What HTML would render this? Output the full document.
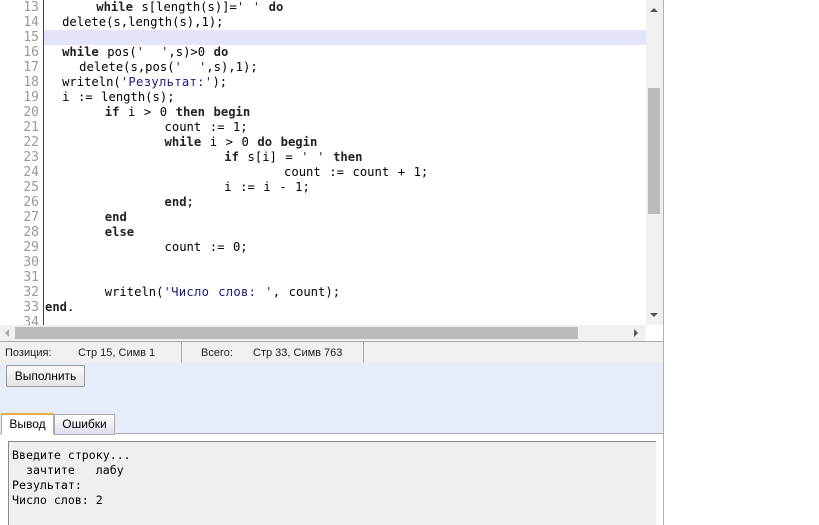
<!DOCTYPE html>
<html><head><meta charset="utf-8"><style>
body{margin:0;width:819px;height:525px;background:#fff;position:relative;overflow:hidden;font-family:"Liberation Sans",Arial,sans-serif}
.panel{position:absolute;left:0;top:0;width:663px;height:525px;border-right:1px solid #b0b0b0;background:#fff;overflow:hidden}
.gut{position:absolute;left:0;top:0;width:43px;height:325px;border-right:1px solid #444;background:#fff}
.ln{position:absolute;left:0;width:39px;text-align:right;font:13px "DejaVu Sans Mono",monospace;color:#999;line-height:15px}
.code{position:absolute;left:45px;font:12.2px "DejaVu Sans Mono",monospace;word-spacing:1.2px;line-height:15px;white-space:pre;color:#000}
b{font-weight:bold;color:#222}
.s{color:#1a1a80}
.c{letter-spacing:0.3px}
.hl{position:absolute;left:44px;top:30px;width:602px;height:15px;background:#e4e4fa}
.vs{position:absolute;left:646px;top:0;width:17px;height:325px;background:#f0f0f0}
.hs{position:absolute;left:0;top:325px;width:646px;height:16px;background:#f0f0f0}
.status{position:absolute;left:0;top:341px;width:663px;height:21px;background:#f0f0f0;border-top:1px solid #aaa;border-bottom:1px solid #aaa;font-size:11px;color:#222}
.status span{position:absolute;top:5px}
.blue{position:absolute;left:0;top:363px;width:663px;height:70px;background:#e6ecf8}
.btn{position:absolute;left:6px;top:365px;width:77px;height:20px;border:1px solid #999;background:linear-gradient(#fafafa,#e4e4e4);font-size:12px;text-align:center;line-height:20px;border-radius:2px}
.tab{position:absolute;top:414px;height:19px;border:1px solid #aaa;font-size:12px;line-height:19px;text-align:center}
.out{position:absolute;left:8px;top:441px;width:648px;height:84px;background:#efefef;border-top:1px solid #888;border-left:1px solid #888;font:11.6px "DejaVu Sans Mono",monospace;line-height:15px;white-space:pre;padding:6px 0 0 3px;box-sizing:border-box}
</style></head><body>
<div class="panel">
<div class="hl"></div>
<div class="gut"></div>
<div class="ln" style="top:0">13<br>14<br>15<br>16<br>17<br>18<br>19<br>20<br>21<br>22<br>23<br>24<br>25<br>26<br>27<br>28<br>29<br>30<br>31<br>32<br>33<br>34</div>
<div class="code" style="top:0">      <b>while</b> s[length(s)]=<span class="s">' '</span> <b>do</b>
  delete(s,length(s),1);

  <b>while</b> pos(<span class="s">'  '</span>,s)>0 <b>do</b>
    delete(s,pos(<span class="s">'  '</span>,s),1);
  writeln(<span class="s c">'Результат:'</span>);
  i := length(s);
       <b>if</b> i > 0 <b>then</b> <b>begin</b>
              count := 1;
              <b>while</b> i > 0 <b>do</b> <b>begin</b>
                     <b>if</b> s[i] = <span class="s">' '</span> <b>then</b>
                            count := count + 1;
                     i := i - 1;
              <b>end</b>;
       <b>end</b>
       <b>else</b>
              count := 0;


       writeln(<span class="s c">'Число слов: '</span>, count);
<b>end</b>.
</div>
<div class="vs"><div style="position:absolute;left:2px;top:88px;width:12px;height:126px;background:#bbb"></div>
<div style="position:absolute;left:4px;top:8px;border:4px solid transparent;border-bottom:4px solid #555;border-top:0"></div>
<div style="position:absolute;left:4px;top:313px;border:4px solid transparent;border-top:4px solid #555;border-bottom:0"></div></div>
<div class="hs"><div style="position:absolute;left:15px;top:2px;width:563px;height:12px;background:#bbb"></div>
<div style="position:absolute;left:5px;top:4px;border:4px solid transparent;border-right:4px solid #aaa;border-left:0"></div>
<div style="position:absolute;left:634px;top:4px;border:4px solid transparent;border-left:4px solid #555;border-right:0"></div></div>
<div class="status"><span style="left:5px">Позиция:</span><span style="left:78px">Стр 15, Симв 1</span>
<div style="position:absolute;left:181px;top:0;width:1px;height:21px;background:#aaa"></div>
<span style="left:201px">Всего:</span><span style="left:253px">Стр 33, Симв 763</span>
<div style="position:absolute;left:363px;top:0;width:1px;height:21px;background:#aaa"></div></div>
<div class="blue"></div>
<div class="btn">Выполнить</div>
<div style="position:absolute;left:0;top:433px;width:663px;height:1px;background:#aaa"></div>
<div class="tab" style="left:1px;width:51px;background:#fff;border-top:2px solid #e8b040;top:413px;border-bottom:1px solid #fff">Вывод</div>
<div class="tab" style="left:54px;width:59px;background:linear-gradient(#fff,#dde)">Ошибки</div>
<div class="out">Введите строку...
  зачтите   лабу
Результат:
Число слов: 2</div>
</div>
</body></html>
